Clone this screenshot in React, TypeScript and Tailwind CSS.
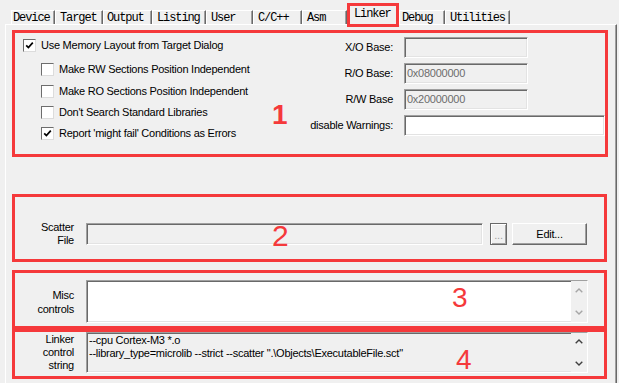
const tabs = [
  { name: 'Device', w: 44, pl: 1 },
  { name: 'Target', w: 48, pl: 4 },
  { name: 'Output', w: 49, pl: 3 },
  { name: 'Listing', w: 54, pl: 4 },
  { name: 'User', w: 47, pl: 4 },
  { name: 'C/C++', w: 49, pl: 4 },
  { name: 'Asm', w: 45, pl: 4 },
  { name: 'Linker', w: 52, pl: 4, active: true },
  { name: 'Debug', w: 46, pl: 2 },
  { name: 'Utilities', w: 65, pl: 4 },
]

const sunken =
  'border border-t-[#a0a0a0] border-l-[#a0a0a0] border-r-white border-b-white shadow-[inset_1px_1px_0_#696969,inset_-1px_-1px_0_#e3e3e3]'

function Check({ checked }: { checked?: boolean }) {
  return (
    <span className="flex h-[13px] w-[13px] shrink-0 items-center justify-center border border-t-[#6d6d6d] border-l-[#6d6d6d] border-r-[#dcdcdc] border-b-[#dcdcdc] bg-white">
      {checked && (
        <svg width="9" height="9" viewBox="0 0 9 9">
          <path d="M1.2 4.3 L3.4 6.6 L7.8 1.6" fill="none" stroke="#000" strokeWidth="1.7" />
        </svg>
      )}
    </span>
  )
}

function CheckRow({ label, checked, sub, className = '' }: { label: string; checked?: boolean; sub?: boolean; className?: string }) {
  return (
    <div className={`flex items-center gap-[5px] ${sub ? 'pl-[18px]' : ''} ${className}`}>
      <Check checked={checked} />
      <span>{label}</span>
    </div>
  )
}

function Chevron({ up, color }: { up?: boolean; color: string }) {
  return (
    <svg width="8" height="5" viewBox="0 0 8 5">
      <path d={up ? 'M0.7 4.3 L4 1 L7.3 4.3' : 'M0.7 0.7 L4 4 L7.3 0.7'} fill="none" stroke={color} strokeWidth="1.4" />
    </svg>
  )
}

function Scrollbar({ color, py }: { color: string; py: string }) {
  return (
    <div className={`flex h-full w-[16px] flex-col items-center justify-between bg-[#f0f0f0] ${py}`}>
      <Chevron up color={color} />
      <Chevron color={color} />
    </div>
  )
}

function Num({ n, className }: { n: string; className: string }) {
  return (
    <span className={`absolute leading-none tracking-normal text-[#f5393b] ${className}`}>{n}</span>
  )
}

export default function App() {
  return (
    <div className="h-[383px] w-[619px] overflow-hidden bg-[#f0f0f0] font-['Liberation_Sans',Arial,sans-serif] text-[11px] tracking-[-0.25px] text-black">
      <div className="flex h-[24px] items-start pl-[11px] font-['Liberation_Mono',monospace] text-[12px] tracking-[-1.1px]">
        {tabs.map((t) =>
          t.active ? (
            <div
              key={t.name}
              style={{ width: t.w, paddingLeft: t.pl }}
              className="relative z-10 mt-[3px] flex h-[24px] shrink-0 items-center border-[3px] border-[#f5393b] bg-[#f0f0f0] pb-[2px]"
            >
              {t.name}
            </div>
          ) : (
            <div
              key={t.name}
              style={{ width: t.w, paddingLeft: t.pl }}
              className="mt-[10px] flex h-[14px] shrink-0 items-center border-l border-t border-r border-l-white border-t-white border-r-[#696969] pt-[1px] shadow-[inset_-1px_0_0_#a0a0a0]"
            >
              {t.name}
            </div>
          ),
        )}
      </div>

      <div className="ml-[5px] h-[400px] w-[612px] border-l border-t border-r border-l-white border-t-white border-r-[#696969] shadow-[inset_-1px_0_0_#a0a0a0]">
        {/* 1 */}
        <div className="relative ml-[6px] mt-[5px] flex h-[127px] w-[596px] border-[3px] border-[#f5393b]">
          <div className="flex-1 pl-[8px] pt-[2px]">
            <CheckRow label="Use Memory Layout from Target Dialog" checked className="h-[21px]" />
            <CheckRow label="Make RW Sections Position Independent" sub className="mt-[2px] h-[22px]" />
            <CheckRow label="Make RO Sections Position Independent" sub className="h-[22px]" />
            <CheckRow label="Don't Search Standard Libraries" sub className="h-[21px]" />
            <CheckRow label="Report 'might fail' Conditions as Errors" checked sub className="h-[21px]" />
          </div>
          <div className="grid w-[301px] grid-cols-[89px_1fr] content-start gap-x-[11px] gap-y-[5px] pt-[4px]">
            <span className="flex h-[21px] items-center justify-end">X/O Base:</span>
            <div className={`h-[21px] w-[124px] bg-[#f0f0f0] ${sunken}`} />
            <span className="flex h-[21px] items-center justify-end">R/O Base:</span>
            <div className={`flex h-[21px] w-[124px] items-center bg-[#f0f0f0] pl-[2px] text-[#6d6d6d] ${sunken}`}>0x08000000</div>
            <span className="flex h-[21px] items-center justify-end">R/W Base</span>
            <div className={`flex h-[21px] w-[124px] items-center bg-[#f0f0f0] pl-[2px] text-[#6d6d6d] ${sunken}`}>0x20000000</div>
            <span className="flex h-[21px] items-center justify-end whitespace-nowrap">disable Warnings:</span>
            <div className={`h-[21px] w-full bg-white ${sunken}`} />
          </div>
          <Num n="1" className="left-[257px] top-[68px] text-[28px] font-bold" />
        </div>

        {/* 2 */}
        <div className="relative ml-[6px] mt-[37px] flex h-[68px] w-[595px] items-start border-[3px] border-[#f5393b] pt-[24px]">
          <div className="flex items-center">
            <div className="w-[59px] text-right leading-[13px]">
              Scatter
              <br />
              File
            </div>
            <div className={`ml-[12px] h-[22px] w-[397px] bg-[#f0f0f0] ${sunken}`} />
            <div className="ml-[7px] flex h-[22px] w-[17px] items-center justify-center border border-[#696969] pt-[2px] text-[#a0a0a0] shadow-[inset_1px_1px_0_#fff,inset_-1px_-1px_0_#a0a0a0]">
              ...
            </div>
            <div className="ml-[5px] flex h-[22px] w-[75px] items-center justify-center border border-t-white border-l-white border-r-[#696969] border-b-[#696969] shadow-[inset_-1px_-1px_0_#a0a0a0]">
              Edit...
            </div>
          </div>
          <Num n="2" className="left-[257px] top-[24px] text-[30px]" />
        </div>

        {/* 3 */}
        <div className="relative ml-[6px] mt-[8px] flex h-[59px] w-[595px] items-start border-[3px] border-[#f5393b] pt-[7px]">
          <div className="flex items-center">
            <div className="w-[59px] text-right leading-[14px]">
              Misc
              <br />
              controls
            </div>
            <div className={`ml-[12px] flex h-[43px] w-[502px] justify-end bg-white ${sunken}`}>
              <Scrollbar color="#a6a6a6" py="py-[7px]" />
            </div>
          </div>
          <Num n="3" className="left-[437px] top-[11px] text-[28px]" />
        </div>

        {/* 4 */}
        <div className="relative ml-[6px] flex h-[50px] w-[595px] items-start border-[3px] border-[#f5393b]">
          <div className="flex items-center">
            <div className="w-[59px] text-right leading-[13px]">
              Linker
              <br />
              control
              <br />
              string
            </div>
            <div className={`ml-[12px] flex h-[41px] w-[502px] bg-[#f0f0f0] ${sunken}`}>
              <div className="flex-1 whitespace-nowrap pl-[2px] pt-[1px] leading-[13px]">
                --cpu Cortex-M3 *.o
                <br />
                --library_type=microlib --strict --scatter ".\Objects\ExecutableFile.sct"
              </div>
              <Scrollbar color="#404040" py="py-[6px]" />
            </div>
          </div>
          <Num n="4" className="left-[441px] top-[14px] text-[28px]" />
        </div>
      </div>
    </div>
  )
}
